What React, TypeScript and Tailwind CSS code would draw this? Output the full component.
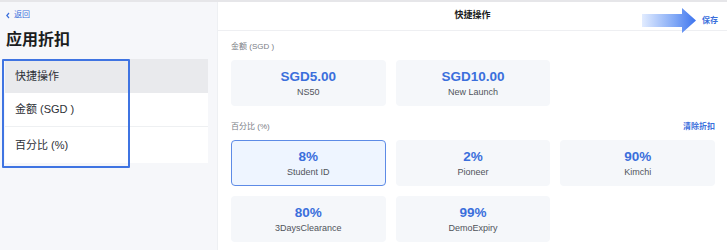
import React from "react";

const amounts = [
  { value: "SGD5.00", label: "NS50" },
  { value: "SGD10.00", label: "New Launch" },
];

const percents = [
  { value: "8%", label: "Student ID", active: true },
  { value: "2%", label: "Pioneer" },
  { value: "90%", label: "Kimchi" },
  { value: "80%", label: "3DaysClearance" },
  { value: "99%", label: "DemoExpiry" },
];

function Card({ value, label, active }: { value: string; label: string; active?: boolean }) {
  return (
    <button
      className={
        "h-[46px] rounded-[4px] flex flex-col items-center justify-center gap-[2px] border " +
        (active ? "bg-[#eef5ff] border-[#5d8be6]" : "bg-[#f5f7fa] border-transparent")
      }
    >
      <span className="text-[13.5px] leading-[16px] font-bold text-[#3b6fdc]">{value}</span>
      <span className="text-[9px] leading-[11px] font-normal text-[#50545b]">{label}</span>
    </button>
  );
}

export default function App() {
  return (
    <div
      className="w-[727px] h-[250px] bg-white overflow-hidden flex flex-col"
      style={{ fontFamily: "'Liberation Sans', 'Noto Sans CJK SC', sans-serif" }}
    >
      <div className="h-[2px] bg-[#e6e6e9] shrink-0" />
      <div className="flex flex-1 min-h-0">
        {/* left side */}
        <aside className="w-[218px] bg-[#f6f7fa] border-r border-[#eef0f3] relative px-[5px] pt-[8px]">
          <a className="flex items-center gap-[3px] text-[8px] leading-[10px] text-[#3b6fdc]">
            <svg width="6" height="7" viewBox="0 0 6 7">
              <path d="M4 1 L1.8 3.5 L4 6" stroke="#3b6fdc" strokeWidth="1.2" fill="none" />
            </svg>
            返回
          </a>
          <h1 className="mt-[10px] text-[16px] leading-[20px] font-bold text-[#1b1d21] pl-[1px]">应用折扣</h1>
          <ul className="mt-[9px] w-[203px] bg-white text-[11px] text-[#2d3036]">
            <li className="h-[34px] flex items-center px-[10px] bg-[#e9eaed]">快捷操作</li>
            <li className="h-[34px] flex items-center px-[10px] border-b border-[#eef0f2]">金额 (SGD )</li>
            <li className="h-[36px] flex items-center px-[10px]">百分比 (%)</li>
          </ul>
          <div className="absolute left-[2px] top-[57px] w-[128px] h-[109px] border-2 border-[#3f74e2] rounded-[1px] pointer-events-none" />
        </aside>

        {/* right side */}
        <main className="flex-1 flex flex-col">
          <header className="h-[29px] border-b border-[#eeeff2] relative flex items-center justify-center">
            <span className="text-[9px] font-bold text-[#1b1d21]">快捷操作</span>
            <div className="absolute right-[9px] top-[6px] flex items-center gap-[6px]">
              <svg width="54" height="25" viewBox="0 0 54 25">
                <defs>
                  <linearGradient id="arrowGrad" x1="0" x2="1" y1="0" y2="0">
                    <stop offset="0" stopColor="#e2ecff" />
                    <stop offset="0.6" stopColor="#82a9f6" />
                    <stop offset="1" stopColor="#3d74ee" />
                  </linearGradient>
                </defs>
                <path d="M0 6 H40 V0 L54 12.5 L40 25 V19 H0 Z" fill="url(#arrowGrad)" />
              </svg>
              <span className="text-[8px] font-bold text-[#3b6fdc]">保存</span>
            </div>
          </header>
          <div className="px-[13px] pr-[12px] pt-[10px]">
            <div className="text-[8px] leading-[11px] text-[#7a7e86]">金额 (SGD )</div>
            <div className="mt-[8px] grid grid-cols-3 gap-[10px]">
              {amounts.map((a) => (
                <Card key={a.label} {...a} />
              ))}
            </div>
            <div className="mt-[15px] flex justify-between items-center">
              <span className="text-[8px] leading-[11px] text-[#7a7e86]">百分比 (%)</span>
              <span className="text-[8px] leading-[11px] font-bold text-[#3b6fdc]">清除折扣</span>
            </div>
            <div className="mt-[8px] grid grid-cols-3 gap-[10px]">
              {percents.map((p) => (
                <Card key={p.label} {...p} />
              ))}
            </div>
          </div>
        </main>
      </div>
    </div>
  );
}
